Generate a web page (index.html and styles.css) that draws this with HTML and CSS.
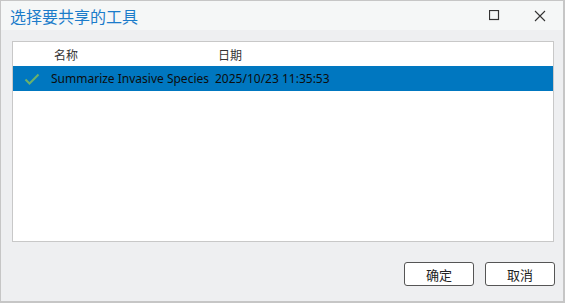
FILE: index.html
```html
<!DOCTYPE html>
<html lang="zh-CN">
<head>
    <meta charset="UTF-8">
    <title>选择要共享的工具</title>
    <link rel="stylesheet" href="styles.css">
</head>
<body>
    <div class="window">
        <div class="titlebar">
            <span class="title">选择要共享的工具</span>
            <div class="controls">
                <span class="ctrl">
                    <svg width="11" height="11" viewBox="0 0 11 11"><rect x="0.5" y="0.5" width="9" height="9" fill="none" stroke="#333" stroke-width="1.2"/></svg>
                </span>
                <span class="ctrl">
                    <svg width="12" height="12" viewBox="0 0 12 12"><path d="M1 1 L11 11 M11 1 L1 11" stroke="#333" stroke-width="1.1"/></svg>
                </span>
            </div>
        </div>
        <div class="content">
            <div class="list">
                <div class="row head">
                    <span class="icon"></span>
                    <span class="name">名称</span>
                    <span class="date">日期</span>
                </div>
                <div class="row selected">
                    <span class="icon">
                        <svg width="16" height="12" viewBox="0 0 16 12"><path d="M1.5 6.5 L5.5 10.5 L14.5 1.5" fill="none" stroke="#6bb26b" stroke-width="2"/></svg>
                    </span>
                    <span class="name">Summarize Invasive Species</span>
                    <span class="date">2025/10/23 11:35:53</span>
                </div>
            </div>
            <div class="buttons">
                <button class="btn">确定</button>
                <button class="btn">取消</button>
            </div>
        </div>
    </div>
</body>
</html>
```
FILE: styles.css
```css
* {
    margin: 0;
    padding: 0;
    box-sizing: border-box;
}

body {
    width: 565px;
    height: 303px;
    font-family: "Noto Sans", "Noto Sans CJK SC", sans-serif;
    background-color: #eeeff1;
}

.window {
    width: 565px;
    height: 303px;
    border: 1px solid #c6c6c6;
    border-right-width: 2px;
    border-bottom-width: 2px;
    display: flex;
    flex-direction: column;
    background-color: #eeeff1;
}

.titlebar {
    height: 29px;
    background-color: #f5f7f7;
    display: flex;
    align-items: center;
    justify-content: space-between;
    padding-left: 9px;
}

.title {
    color: #1b7cca;
    font-size: 16px;
    font-family: "Noto Sans CJK SC", sans-serif;
}

.controls {
    display: flex;
    height: 100%;
}

.ctrl {
    width: 46px;
    display: flex;
    align-items: center;
    justify-content: center;
}

.content {
    flex: 1;
    display: flex;
    flex-direction: column;
    padding: 11px 8px 15px 11px;
}

.list {
    height: 201px;
    margin-right: 1px;
    background-color: #ffffff;
    border: 1px solid #c8c8c8;
}

.row {
    display: flex;
    align-items: center;
    font-size: 12px;
    font-family: "Noto Sans", "Noto Sans CJK SC", sans-serif;
    color: #1a1a1a;
}

.row.head {
    height: 24px;
    color: #333;
    font-family: "Noto Sans CJK SC", sans-serif;
}

.row.selected {
    height: 25px;
    background-color: #0077c0;
    color: #0d0d0d;
}

.icon {
    width: 38px;
    display: flex;
    justify-content: center;
}

.name {
    width: 164px;
}

.head .name {
    padding-left: 3px;
}

.head .date {
    padding-left: 3px;
}

.buttons {
    margin-top: auto;
    display: flex;
    justify-content: flex-end;
    gap: 11px;
}

.btn {
    width: 70px;
    height: 24px;
    background-color: #ffffff;
    border: 1px solid #555;
    border-radius: 3px;
    font-size: 13px;
    font-family: "Noto Sans CJK SC", sans-serif;
    color: #222;
}
```
